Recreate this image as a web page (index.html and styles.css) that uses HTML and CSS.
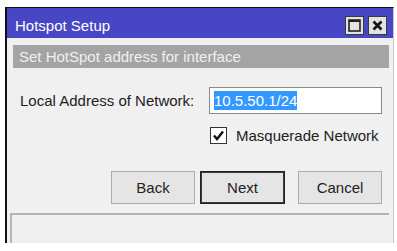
FILE: index.html
```html
<!DOCTYPE html>
<html lang="en">
<head>
    <meta charset="UTF-8">
    <title>Hotspot Setup</title>
    <link rel="stylesheet" href="styles.css">
</head>
<body>
    <div class="window">
        <div class="titlebar">
            <span class="title">Hotspot Setup</span>
            <div class="title-buttons">
                <div class="tbtn">
                    <svg width="17" height="17" viewBox="0 0 17 17"><rect x="3" y="3" width="11" height="11" fill="none" stroke="#222" stroke-width="1.6"/><line x1="3" y1="4" x2="14" y2="4" stroke="#222" stroke-width="2"/></svg>
                </div>
                <div class="tbtn">
                    <svg width="17" height="17" viewBox="0 0 17 17"><path d="M4.5 4.5 L12.5 12.5 M12.5 4.5 L4.5 12.5" stroke="#111" stroke-width="2.6" fill="none"/></svg>
                </div>
            </div>
        </div>

        <div class="step-bar">Set HotSpot address for interface</div>

        <div class="form">
            <div class="form-row">
                <label for="addr">Local Address of Network:</label>
                <div class="field" id="addr"><span class="selected">10.5.50.1/24</span></div>
            </div>
            <div class="form-row">
                <span></span>
                <div class="check-row">
                    <span class="checkbox">
                        <svg width="15" height="15" viewBox="0 0 15 15"><path d="M3 7.5 L6 11 L12 3.5" stroke="#111" stroke-width="2.4" fill="none"/></svg>
                    </span>
                    <span>Masquerade Network</span>
                </div>
            </div>
        </div>

        <div class="buttons">
            <button class="btn">Back</button>
            <button class="btn btn-default">Next</button>
            <button class="btn btn-cancel">Cancel</button>
        </div>

        <div class="status"></div>
    </div>
</body>
</html>
```

FILE: styles.css
```css
body {
    margin: 0;
    background: #ffffff;
    font-family: "Liberation Sans", Arial, sans-serif;
    font-size: 15px;
    color: #222;
}

.window {
    margin: 7px 0 0 5px;
    width: 386px;
    height: 235px;
    background: #f0f0f0;
    border-top: 1px solid #111;
    border-left: 2px solid #111;
    border-right: 1px solid #c8c8c8;
    overflow: hidden;
}

.titlebar {
    height: 30px;
    background: #4747c6;
    display: flex;
    align-items: flex-end;
    justify-content: space-between;
    padding: 0 6px 3px 8px;
    box-sizing: border-box;
}

.title {
    color: #fff;
    font-size: 15px;
    line-height: 18px;
}

.title-buttons {
    display: flex;
    gap: 4px;
}

.tbtn {
    width: 17px;
    height: 17px;
    border: 1px solid #3a3a3a;
    background: #e2e2e2;
    display: flex;
}

.step-bar {
    margin: 7px 4px 0 6px;
    height: 23px;
    line-height: 23px;
    background: #a4a4a4;
    color: #f0f0f0;
    padding-left: 6px;
}

.form {
    padding: 19px 11px 0 13px;
}

.form-row {
    display: grid;
    grid-template-columns: 189px 173px;
    align-items: center;
}

.field {
    height: 27px;
    box-sizing: border-box;
    border: 1px solid #8a8a8a;
    background: #fff;
    padding: 3px 4px;
    display: flex;
    align-items: center;
}

.selected {
    background: #3399ff;
    color: #fff;
    line-height: 19px;
}

.check-row {
    display: flex;
    align-items: center;
    gap: 9px;
    margin-top: 13px;
    margin-left: 1px;
}

.checkbox {
    width: 15px;
    height: 15px;
    border: 1px solid #333;
    background: #fff;
    display: flex;
}

.buttons {
    display: flex;
    justify-content: flex-end;
    padding: 27px 11px 0 0;
}

.btn {
    width: 84px;
    height: 33px;
    font-family: inherit;
    font-size: 15px;
    color: #222;
    background: #e5e5e5;
    border: 1px solid #acacac;
    margin-left: 5px;
}

.btn-default {
    border: 1px solid #222;
    box-shadow: inset 0 0 0 1px #3c3c3c;
    width: 85px;
}

.btn-cancel {
    margin-left: 13px;
}

.status {
    margin: 9px 4px 0 3px;
    height: 40px;
    border-top: 2px solid #b4b4b4;
    border-left: 2px solid #b4b4b4;
}
```
